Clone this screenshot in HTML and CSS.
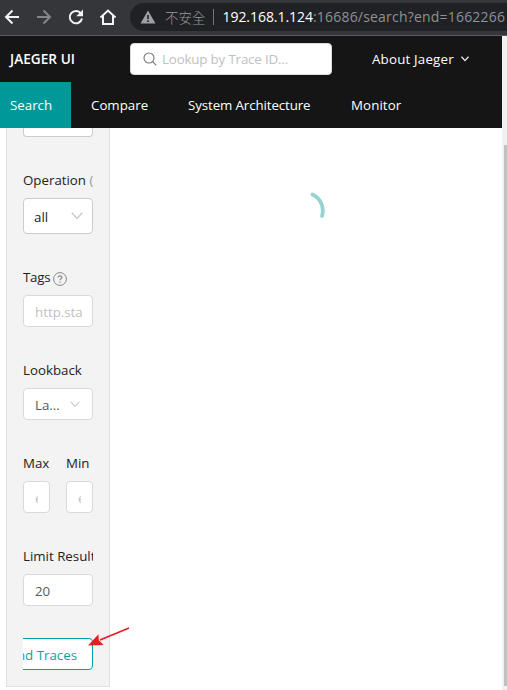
FILE: index.html
```html
<!DOCTYPE html>
<html lang="en">
<head>
<meta charset="utf-8">
<title>Jaeger UI</title>
<link rel="stylesheet" href="styles.css">
</head>
<body>
<div class="browser">
  <svg class="nav-icons" width="120" height="35" viewBox="0 0 120 35" fill="none" stroke="#f1f3f4" stroke-width="2">
    <path d="M19 17H6.500M12.500 10.500L6 17l6.500 6.500"/>
    <path stroke="#85868a" d="M37 17h12.500M43.500 10.500L50 17l-6.500 6.500"/>
    <path d="M81 13.500a6.200 6.200 0 1 0 1 5"/>
    <path fill="#f1f3f4" stroke="none" d="M83 9.500v6.800h-6.800z"/>
    <path d="M100.500 17.500L108 10.500l7.500 7M103 15.500V24h10v-8.500"/>
  </svg>
  <div class="omnibox">
    <svg width="16" height="14" viewBox="0 0 16 14"><path fill="#9aa0a6" d="M8 .5L15.500 13.500H.5z"/><path stroke="#202124" stroke-width="1.600" d="M8 5v4M8 10.300v1.700"/></svg>
    <span class="insecure">不安全</span>
    <i class="divider"></i>
    <span class="host">192.168.1.124</span><span class="path">:16686/search?end=1662266</span>
  </div>
</div>
<div class="viewport">
  <div class="page">
    <header>
      <div class="top">
        <b class="brand">JAEGER UI</b>
        <div class="lookup">
          <svg width="14" height="14" viewBox="0 0 14 14" fill="none" stroke="#777" stroke-width="1.100"><circle cx="6" cy="6" r="5"/><path d="M9.600 9.600L13.300 13.300"/></svg>
          <span>Lookup by Trace ID...</span>
        </div>
        <div class="about"><span>About Jaeger</span>
          <svg width="8" height="6" viewBox="0 0 8 6" fill="none" stroke="#eee" stroke-width="1.300"><path d="M.5 .8L4 4.600 7.500 .8"/></svg>
        </div>
      </div>
      <nav>
        <a class="active"><span>Search</span></a>
        <a><span class="t-compare">Compare</span></a>
        <a><span class="t-arch">System Architecture</span></a>
        <a><span class="t-monitor">Monitor</span></a>
      </nav>
    </header>
    <main>
      <aside>
        <div class="box strong cut"></div>
        <div class="field">
          <label>Operation <span class="muted">(4)</span></label>
          <div class="box strong tall"><span>all</span>
            <svg width="12" height="8" viewBox="0 0 12 8" fill="none" stroke="#ccc" stroke-width="1.500"><path d="M.8 .8L6 6.500 11.200 .8"/></svg>
          </div>
        </div>
        <div class="field">
          <label class="t-tags">Tags <svg class="help" width="14" height="14" viewBox="0 0 14 14" fill="none" stroke="#888"><circle cx="7" cy="7" r="6.400"/><path stroke-width="1.200" d="M5.100 5.600C5.100 3.200 8.900 3.200 8.900 5.500 8.900 6.900 7 6.700 7 8.300M7 9.500v1.200"/></svg></label>
          <div class="box hint"><span>http.sta</span></div>
        </div>
        <div class="field">
          <label>Lookback</label>
          <div class="box value"><span>La...</span>
            <svg width="10" height="7" viewBox="0 0 10 7" fill="none" stroke="#ccc" stroke-width="1.200"><path d="M.8 .8L5 5.300 9.200 .8"/></svg>
          </div>
        </div>
        <div class="pair">
          <div class="field"><label>Max</label><div class="box hint"><span class="sliver">e</span></div></div>
          <div class="field"><label>Min</label><div class="box hint"><span class="sliver">e</span></div></div>
        </div>
        <div class="field">
          <label>Limit Results</label>
          <div class="box value"><span>20</span></div>
        </div>
        <div class="action"><button>Find Traces</button></div>
      </aside>
      <section>
        <svg class="spinner" width="40" height="40" viewBox="0 0 40 40" fill="none" stroke="#98d3d3" stroke-width="3.800" stroke-linecap="round"><path d="M20.500 4.500A18 18 0 0 1 30 26"/></svg>
      </section>
    </main>
  </div>
  <div class="scrollbar"><div class="thumb"></div></div>
</div>
<svg class="pointer" width="46" height="24" viewBox="0 0 46 24"><path stroke="#ed1c24" stroke-width="1.800" d="M43 3L14 15"/><path fill="#ed1c24" d="M2 20.500L12.500 9.200 12.800 15.300 17.600 20z"/></svg>
</body>
</html>
```
FILE: styles.css
```css
* { box-sizing: border-box; }
body {
  margin: 0;
  width: 507px;
  height: 690px;
  overflow: hidden;
  background: #fff;
  color: #222;
  font: 13.3px/22px "Open Sans", "Noto Sans CJK TC", sans-serif;
  white-space: nowrap;
}
svg { flex: none; display: block; }
.browser {
  display: flex;
  align-items: center;
  height: 36px;
  background: #35363a;
  border-bottom: 1px solid #5c5d60;
}
.omnibox {
  display: flex;
  align-items: center;
  flex: none;
  width: 400px;
  height: 28px;
  margin-left: 10px;
  margin-bottom: 1px;
  padding-left: 10px;
  border-radius: 14px;
  background: #202124;
  color: #969a9e;
}
.insecure { margin-left: 9px; font: 300 13.5px/22px "Noto Sans CJK TC", sans-serif; }
.divider { width: 1px; height: 16px; margin: 0 9px 0 7px; background: #72757a; }
.host, .path { font-size: 14px; }
.host { color: #fff; letter-spacing: -.1px; }
.host { letter-spacing: -.05px; }
.path { color: #8e9195; letter-spacing: .2px; }
.viewport { display: flex; height: 654px; }
.page { width: 502px; }
header { height: 92px; background: #151515; color: #fff; }
.top { display: flex; align-items: center; height: 46px; }
.brand { width: 120px; margin-left: 10px; font-size: 13.6px; font-weight: 600; letter-spacing: .05px; }
.lookup {
  display: flex;
  align-items: center;
  width: 202px;
  height: 32px;
  padding-left: 12px;
  border: 1px solid #d9d9d9;
  border-radius: 4px;
  background: #fff;
  color: #bfbfbf;
}
.lookup span { margin-left: 5px; letter-spacing: -.15px; }
.about { display: flex; align-items: center; margin-left: 40px; }
.about span { width: 83px; letter-spacing: .2px; }
.about svg { margin-left: 6px; }
nav { display: flex; height: 46px; }
nav a { display: flex; align-items: center; padding: 0 20px; }
nav .active { width: 71px; padding: 0 10px; background: #009999; }
.t-compare { width: 57px; }
.t-arch { width: 123px; letter-spacing: -.1px; }
.t-monitor { letter-spacing: .1px; }
main { display: flex; height: 562px; overflow: hidden; }
aside {
  flex: none;
  width: 104px;
  height: 559px;
  margin-left: 6px;
  padding: 0 16px;
  background: #f3f3f3;
  border: 1px solid #e0e0e0;
  border-top: 0;
}
.field { margin-top: 32px; min-width: 0; }
label { display: flex; align-items: center; height: 22px; margin-bottom: 7px; overflow: hidden; white-space: pre; }
.muted { color: #999; }
.t-tags { letter-spacing: -.25px; }
.help { margin-top: 3px; }
.box {
  display: flex;
  align-items: center;
  justify-content: space-between;
  height: 32px;
  padding: 0 11px;
  background: #fff;
  border: 1px solid #d9d9d9;
  border-radius: 4px;
  overflow: hidden;
}
.box span { padding-top: 1px; }
.box.strong { border-color: #ccc; }
.box.tall { height: 36px; padding: 0 9px 0 10px; }
.box.cut { height: 9px; border-top: 0; border-radius: 0 0 4px 4px; }
.hint { color: #bfbfbf; }
.value { color: #595959; }
.box.value { padding-right: 12px; }
.sliver { width: 3px; overflow: hidden; }
.pair { display: grid; grid-template-columns: 27px 27px; gap: 16px; }
.action { display: flex; justify-content: flex-end; margin-top: 32px; overflow: hidden; }
button {
  flex: none;
  height: 32px;
  padding: 2px 15px 0;
  background: #fff;
  border: 1px solid #00a3a3;
  border-radius: 4px;
  color: #11a0a0;
  font: inherit;
}
.spinner { margin: 61px 0 0 182px; }
section { padding-top: 1px; }
.scrollbar { width: 5px; padding: 109px 0 0 2px; background: #f1f1f1; }
.thumb { height: 541px; background: #c1c1c1; }
.pointer { position: absolute; left: 86px; top: 625px; }
```
